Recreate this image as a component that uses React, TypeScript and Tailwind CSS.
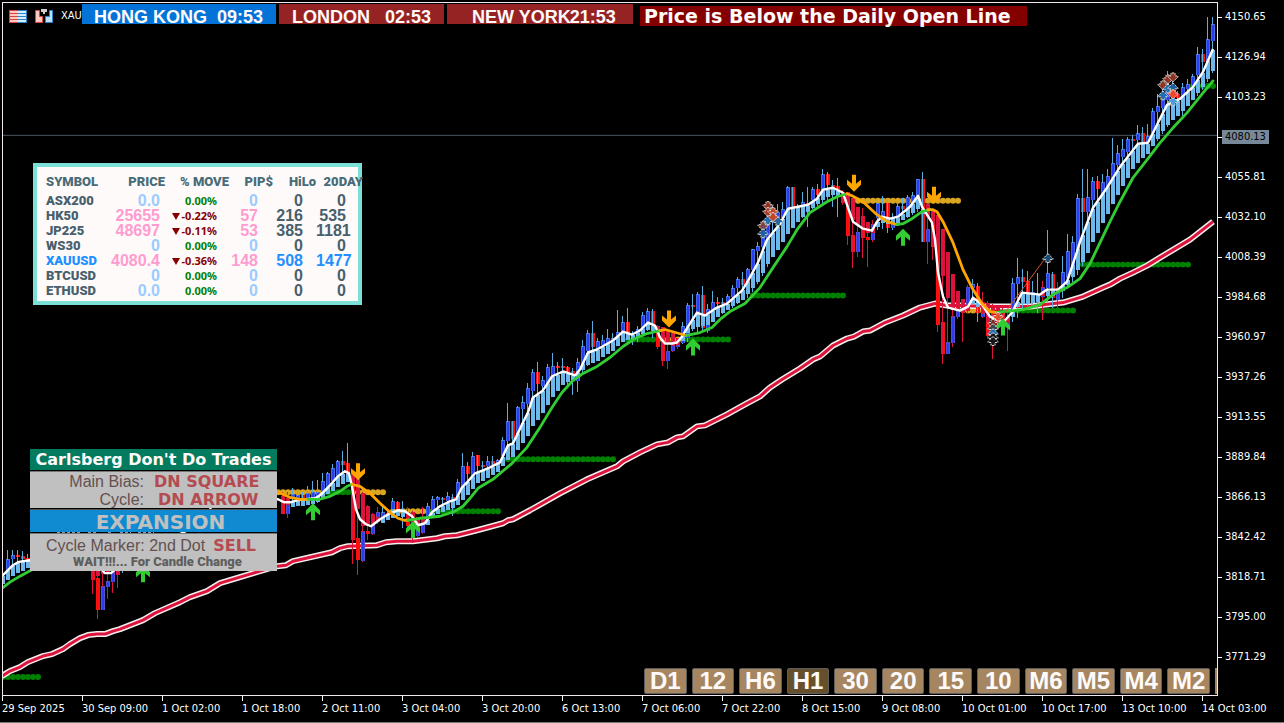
import React from "react";

type Point = [number, number];

const SPACING = 5;

/* Candles: starting x, then one entry per bar: high, body top, body bottom, low, colour. */
const RUNS: [number, string][] = [
  [8, "551 560 578 580 b|551 556 560 572 b|551 556 558 570 r|552 557 560 568 r|555 559 562 568 r"],
  [93, "560 571 581 595 R|565 579 611 620 R|571 587 611 611 B|571 582 588 600 B|571 571 583 594 B|565 573 575 589 R|565 567 570 574 b"],
  [283, "493 503 515 515 R|493 504 515 519 B|489 495 498 504 b|492 496 500 503 b|493 496 500 504 r|487 494 500 503 b|482 493 500 504 b|481 493 499 504 b|474 482 497 499 b|473 474 490 492 b|465 469 482 486 b|461 462 478 482 b|452 462 466 480 r|444 464 482 483 r|475 477 541 565 R|479 539 561 576 R|493 532 562 563 B|506 532 535 541 R|514 522 535 536 B|508 513 523 525 B|508 513 522 523 b|510 514 517 521 r|499 502 510 516 b|502 503 510 513 r|502 511 514 529 b|508 513 527 528 R|512 521 527 544 R|518 525 537 538 B|508 520 534 535 B|504 507 520 523 b|497 500 512 519 b|497 498 501 515 b|498 499 501 512 r|493 497 502 508 b|495 498 502 517 r|480 483 503 506 b|454 467 490 500 b|463 467 475 493 r|453 457 480 487 b|456 456 467 480 r|462 466 468 476 r|457 462 467 474 b|457 462 466 471 r|460 461 464 467 b|438 441 457 464 b|404 422 442 455 b|422 422 440 450 r|407 408 437 445 b|397 403 410 440 b|384 389 405 430 b|370 373 392 415 b|363 373 385 408 r|377 381 387 400 b|365 368 387 395 b|354 367 377 386 b|363 367 369 385 r|359 367 369 385 r|367 368 373 386 r|369 372 382 396 r|359 363 382 393 b|340 346 368 376 b|330 333 352 367 b|321 333 347 363 r|338 341 350 358 b|335 340 345 355 b|329 338 345 351 b|333 338 342 348 b|310 332 340 344 b|316 322 335 341 b|308 322 335 340 r|331 335 338 345 b|326 329 337 342 b|312 315 332 335 b|308 311 323 331 b|309 311 330 338 r|325 326 347 349 R|327 333 362 367 R|330 352 362 370 B|333 345 352 353 B|338 345 347 349 B|322 326 343 344 b|303 305 338 342 b|294 305 307 331 r|292 294 312 332 b|286 295 328 331 r|304 309 331 333 b|291 302 310 319 b|297 302 304 316 r|298 302 304 314 r|294 296 303 310 b|285 288 297 308 b|277 279 288 304 b|272 279 285 300 r|268 269 283 298 b|249 249 270 292 b|242 246 251 284 b|225 233 247 276 b|202 218 240 267 b|206 215 222 257 r|204 212 225 247 b|202 209 218 239 b|186 187 210 231 b|187 187 210 222 r|204 206 211 219 b|192 202 208 218 b|187 203 207 227 r|187 189 200 209 b|184 189 195 206 r|169 174 190 203 b|172 174 185 200 r|180 185 188 207 r|178 186 190 217 r|190 192 203 205 R|192 203 236 245 R|198 235 252 268 R|207 232 252 257 B|208 228 238 258 R|222 237 240 267 R|220 224 240 242 B|202 203 218 230 b|196 211 218 229 b|200 203 228 233 r|213 217 228 230 b|202 206 218 221 b|198 206 209 220 r|195 197 210 218 b|192 195 203 215 b|179 179 197 212 b|172 179 242 242 r|204 229 242 264 B|211 213 247 260 R|215 245 325 332 R|229 322 355 365 R|252 342 355 355 B|274 316 343 347 B|291 310 317 319 B|299 305 311 342 R|285 287 305 313 B|279 284 288 303 b|283 286 313 322 r|292 313 317 318 B|301 303 336 337 R|304 325 335 360 B|305 318 323 328 R|307 318 322 330 R|312 318 325 352 B|278 283 313 322 b|258 277 284 318 b|269 277 282 310 r|271 281 293 306 r|281 292 298 304 b|273 295 302 313 r|281 287 297 320 B|230 273 288 302 b|272 274 298 308 r|282 290 300 313 B|256 272 288 298 b|234 251 278 286 b|236 242 268 282 b|194 198 255 275 b|169 198 212 266 r|169 197 212 252 b|177 181 200 239 b|176 181 189 227 r|174 182 195 215 b|169 176 187 205 b|138 163 180 199 b|145 153 165 192 b|139 149 157 183 b|137 139 152 175 b|135 139 141 167 r|125 133 140 160 b|127 133 143 154 r|124 136 142 150 b|108 111 133 146 b|94 106 112 141 b|88 97 108 134 b|71 88 100 127 b|78 93 98 118 r|91 94 98 111 r|83 87 97 117 b|79 84 89 104 b|74 76 86 100 b|47 54 75 96 b|49 54 62 90 r|17 39 62 82 b|17 24 41 73 b"],
];

const FAST: Point[] = [[2,577],[8,571],[13,566],[18,563],[23,562],[30,561],[98,566],[105,574],[111,574],[125,562],[210,520],[211,495],[278,500],[284,503],[290,503],[297,501],[315,499],[320,496],[330,486],[338,477],[345,472],[349,474],[352,487],[356,510],[360,520],[366,525],[371,527],[380,520],[390,514],[398,511],[405,512],[412,517],[418,526],[425,524],[432,513],[440,507],[450,502],[456,500],[462,488],[468,482],[475,474],[483,471],[490,468],[500,463],[508,446],[513,444],[522,425],[528,413],[533,398],[543,391],[552,377],[563,372],[575,376],[580,370],[588,353],[597,350],[613,341],[623,332],[632,335],[640,331],[648,323],[655,326],[660,338],[665,344],[672,344],[677,343],[682,337],[688,327],[697,313],[705,316],[717,308],[727,304],[742,291],[747,283],[758,263],[767,240],[780,224],[788,209],[798,207],[808,205],[817,199],[823,190],[833,188],[843,193],[848,208],[853,222],[863,229],[872,231],[877,222],[882,217],[890,219],[898,217],[910,207],[918,196],[922,207],[932,223],[935,240],[938,273],[943,297],[948,308],[960,311],[968,307],[973,298],[982,305],[990,317],[1003,323],[1012,313],[1022,293],[1040,295],[1047,290],[1058,290],[1067,282],[1077,252],[1080,242],[1093,208],[1107,188],[1120,167],[1138,144],[1148,143],[1157,125],[1167,105],[1180,99],[1193,87],[1203,72],[1213,49]];

const TREND: { color: string; pts: Point[] }[] = [
  { color: "#32cd32", pts: [[2,589],[10,583],[20,577],[31,571]] },
  { color: "#ffa500", pts: [[278,493],[290,498],[300,500],[308,500]] },
  { color: "#32cd32", pts: [[308,500],[320,500],[330,497],[340,492],[347,487],[352,485]] },
  { color: "#ffa500", pts: [[352,485],[360,487],[370,494],[380,504],[390,513],[398,519],[404,521],[408,521]] },
  { color: "#32cd32", pts: [[408,521],[420,519],[440,517],[455,512],[463,507],[470,499],[478,489],[493,480],[512,464],[527,448],[540,428],[552,408],[562,393],[572,382],[583,374],[597,367],[610,358],[623,347],[635,339],[647,334],[660,331]] },
  { color: "#ffa500", pts: [[660,331],[665,330],[672,332],[686,336]] },
  { color: "#32cd32", pts: [[686,336],[700,333],[712,328],[721,319],[730,312],[745,304],[760,288],[773,268],[787,247],[797,230],[810,213],[827,202],[837,197],[847,194]] },
  { color: "#ffa500", pts: [[847,194],[852,196],[863,202],[877,215],[887,222],[897,225]] },
  { color: "#32cd32", pts: [[897,225],[903,224],[912,219],[922,212],[930,210]] },
  { color: "#ffa500", pts: [[928,210],[933,210],[937,212],[943,222],[953,243],[963,270],[973,290],[982,304],[990,312],[997,313]] },
  { color: "#32cd32", pts: [[997,313],[1003,312],[1023,310],[1040,305],[1053,295],[1067,288],[1080,279],[1090,264],[1100,243],[1110,222],[1120,202],[1133,178],[1147,160],[1160,143],[1173,128],[1187,113],[1203,93],[1213,81]] },
];

const SLOW: Point[] = [[2,677],[10,672],[20,668],[28,663],[43,657],[52,655],[63,650],[70,645],[80,639],[88,636],[97,635],[105,635],[113,632],[120,630],[143,621],[155,614],[180,603],[190,598],[207,592],[220,584],[250,575],[277,567],[286,566],[293,562],[332,553],[340,549],[348,547],[377,546],[386,543],[397,542],[413,542],[437,539],[445,537],[457,536],[477,531],[503,524],[508,521],[513,520],[530,511],[560,494],[587,480],[617,467],[623,462],[640,453],[657,445],[668,443],[677,438],[683,437],[697,427],[705,426],[727,415],[745,405],[760,397],[770,388],[782,380],[800,369],[813,360],[820,357],[833,346],[847,339],[854,337],[863,332],[870,331],[885,323],[903,316],[920,308],[935,304],[947,306],[960,306],[987,307],[1030,307],[1045,305],[1063,303],[1083,297],[1103,288],[1110,285],[1120,279],[1133,273],[1147,266],[1160,258],[1175,249],[1190,240],[1213,222]];

const UP_RANGES: Point[] = [[3,28],[293,348],[383,403],[428,653],[683,838],[878,923],[973,978],[1013,1038],[1048,1053],[1063,1213]];

const DOWN_BARS: [number, number, number][] = [[93,571,575],[98,571,577],[103,571,575],[108,571,574],[113,571,573],[118,571,576],[283,497,507],[288,499,506],[353,475,487],[358,480,510],[363,494,527],[368,507,527],[373,515,526],[378,518,523],[408,513,519],[413,513,523],[418,518,528],[423,520,525],[658,326,331],[663,327,338],[668,330,343],[673,333,346],[678,338,345],[843,192,197],[848,192,206],[853,198,220],[858,207,225],[863,216,230],[868,222,233],[873,228,233],[928,204,217],[933,211,225],[938,215,245],[943,229,276],[948,252,298],[953,274,310],[958,291,310],[963,299,313],[968,305,311],[983,302,313],[988,303,322],[993,305,320],[998,308,318],[1003,313,318],[1008,317,323],[1043,291,296],[1058,288,292]];

const DOTS: [number, number, number, string][] = [[3,38,678,"g"],[278,323,493,"y"],[328,353,493,"g"],[358,383,493,"y"],[393,428,512,"y"],[433,498,512,"g"],[508,613,460,"g"],[628,658,340,"g"],[663,683,340,"y"],[688,728,340,"g"],[753,843,296,"g"],[858,958,201,"y"],[968,993,311,"y"],[998,1073,311,"g"],[1083,1188,265,"g"],[1193,1213,86,"g"]];

const BUY_ARROWS: Point[] = [[143,566],[313,504],[413,522],[693,339],[903,229],[1003,319]];
const SELL_ARROWS: Point[] = [[358,481],[669,328],[854,192],[934,204]];

const TRADES: [number, number, "up" | "down", string][] = [
  [768,206,"down","#8b3526"],[768,212,"down","#a0412c"],[763,226,"down","#7c4444"],[763,234,"up","#1f5f9e"],[768,221,"up","#1f6fb4"],[778,222,"up","#27689c"],[773,212,"down","#c2452a"],[773,217,"down","#c2452a"],
  [998,317,"down","#e4502c"],[993,324,"down","#7c2b22"],[993,329,"up","#3c4550"],[993,334,"up","#1f6fb4"],[993,338,"up","#14181c"],[993,342,"up","#14181c"],
  [1048,259,"up","#1c4a70"],
  [1163,85,"down","#8b3526"],[1168,79,"down","#8b3526"],[1173,77,"down","#8b3526"],[1168,89,"up","#1f6fb4"],[1173,88,"up","#1f5f9e"],[1163,96,"up","#1f6fb4"],[1173,102,"up","#4a9ed8"],[1173,94,"down","#f0452a"],
];

const PRICES = ["4150.65","4126.94","4103.23","4080.13","4055.81","4032.10","4008.39","3984.68","3960.97","3937.26","3913.55","3889.84","3866.13","3842.42","3818.71","3795.00","3771.29"];
const TIMES = ["29 Sep 2025","30 Sep 09:00","1 Oct 02:00","1 Oct 18:00","2 Oct 11:00","3 Oct 04:00","3 Oct 20:00","6 Oct 13:00","7 Oct 06:00","7 Oct 22:00","8 Oct 15:00","9 Oct 08:00","10 Oct 01:00","10 Oct 17:00","13 Oct 10:00","14 Oct 03:00"];
const FRAMES = ["D1","12","H6","H1","30","20","15","10","M6","M5","M4","M2"];

const ROWS = [
  { sym: "ASX200", price: "0.0", move: "0.00%", pip: "0", hilo: "0", day: "0" },
  { sym: "HK50", price: "25655", move: "-0.22%", pip: "57", hilo: "216", day: "535" },
  { sym: "JP225", price: "48697", move: "-0.11%", pip: "53", hilo: "385", day: "1181" },
  { sym: "WS30", price: "0", move: "0.00%", pip: "0", hilo: "0", day: "0" },
  { sym: "XAUUSD", price: "4080.4", move: "-0.36%", pip: "148", hilo: "508", day: "1477" },
  { sym: "BTCUSD", price: "0", move: "0.00%", pip: "0", hilo: "0", day: "0" },
  { sym: "ETHUSD", price: "0.0", move: "0.00%", pip: "0", hilo: "0", day: "0" },
];

const toPoints = (pts: Point[]) => pts.map((p) => p.join(",")).join(" ");

function valueAt(pts: Point[], x: number) {
  for (let i = 1; i < pts.length; i++) {
    const [x0, y0] = pts[i - 1];
    const [x1, y1] = pts[i];
    if (x <= x1) return y0 + ((y1 - y0) * (x - x0)) / (x1 - x0);
  }
  return pts[pts.length - 1][1];
}

const TREND_ALL = TREND.flatMap((s) => s.pts);

function Candles() {
  return (
    <g shapeRendering="crispEdges">
      {RUNS.map(([start, text]) =>
        text.split("|").map((entry, i) => {
          const [h, t, b, l, c] = entry.split(" ");
          const x = start + i * SPACING;
          const top = Number(t);
          const height = Math.max(2, Number(b) - top);
          const blue = c.toLowerCase() === "b";
          const rising = c === c.toLowerCase();
          const wick = rising ? "#5aaee0" : "#dc143c";
          return (
            <g key={x}>
              <rect x={x - 2} y={top} width={4} height={height} fill={blue ? (rising ? "#4169e1" : "#5a4fd0") : "#ff1010"} />
              <rect x={x - 1} y={Number(h)} width={1} height={Number(l) - Number(h)} fill={wick} />
              {blue && <rect x={x - 1} y={top + 1} width={2} height={height - 1} fill="#2a3cf5" />}
            </g>
          );
        })
      )}
    </g>
  );
}

function Histogram() {
  return (
    <g shapeRendering="crispEdges">
      {UP_RANGES.flatMap(([a, b]) => {
        const bars = [];
        for (let x = a; x <= b; x += SPACING) {
          const w = valueAt(FAST, x);
          const g = valueAt(TREND_ALL, x);
          const bottom = Math.max(w + 6, w + 0.7 * (g - w));
          bars.push(<rect key={x} x={x - 2} y={w + 1} width={4} height={bottom - w - 1} fill="#6cb8ea" />);
        }
        return bars;
      })}
      {DOWN_BARS.map(([x, t, b]) => (
        <rect key={x} x={x - 2} y={t} width={4} height={b - t} fill="#dc143c" />
      ))}
    </g>
  );
}

function Chart() {
  return (
    <svg className="block h-full w-full" viewBox="3 3 1214 693" preserveAspectRatio="none" role="img" aria-label="XAUUSD H1 price chart">
      <rect x="3" y="135" width="1214" height="1" fill="#4b545e" />
      {DOTS.flatMap(([a, b, y, c]) => {
        const out = [];
        for (let x = a; x <= b; x += SPACING) out.push(<circle key={`${x}-${y}`} cx={x} cy={y} r={3} fill={c === "g" ? "#008000" : "#daa520"} />);
        return out;
      })}
      <polyline points={toPoints(SLOW)} fill="none" stroke="#f4eeee" strokeWidth={6} strokeLinejoin="round" />
      <polyline points={toPoints(SLOW)} fill="none" stroke="#dc143c" strokeWidth={3} strokeLinejoin="round" />
      <Candles />
      <Histogram />
      <polyline points={toPoints(FAST)} fill="none" stroke="#ffffff" strokeWidth={2.4} strokeLinejoin="round" />
      {TREND.map((s, i) => (
        <polyline key={i} points={toPoints(s.pts)} fill="none" stroke={s.color} strokeWidth={2.8} strokeLinejoin="round" strokeLinecap="round" />
      ))}
      <path d="M57 533H80M88 533H97M108 533H113M120 533H131M138 533H154" stroke="#8a9ab0" strokeWidth="2" strokeDasharray="3 2" />
      <path d="M997 324L1048 255" stroke="#d9532c" strokeWidth="1" />
      {BUY_ARROWS.map(([x, y]) => (
        <path key={x} transform={`translate(${x} ${y})`} d="M0 0L7 7V12L2 8V17H-2V8L-7 12V7Z" fill="#32cd32" />
      ))}
      {SELL_ARROWS.map(([x, y]) => (
        <path key={x} transform={`translate(${x} ${y})`} d="M0 0L7-7V-12L2-8V-17H-2V-8L-7-12V-7Z" fill="#ffa500" />
      ))}
      {TRADES.map(([x, y, dir, fill], i) => (
        <path
          key={i}
          transform={`translate(${x} ${y})${dir === "down" ? " scale(1 -1)" : ""}`}
          d="M0-5L5 0V1H2V4H-2V1H-5V0Z"
          fill={fill}
          stroke="#e8e0dc"
          strokeWidth="1"
          strokeDasharray="2 1"
        />
      ))}
    </svg>
  );
}

function SessionBar() {
  return (
    <header className="absolute top-px left-0 flex items-start font-['Liberation_Sans',Arial,sans-serif] text-[18px] leading-[18px] font-bold whitespace-pre text-[#fffafa]">
      <div className="flex h-6 w-[79px] items-center gap-2 pl-[6px] font-['DejaVu_Sans_Condensed','DejaVu_Sans',sans-serif] text-[11px] font-normal text-white">
        <svg className="shrink-0" width="18" height="13" viewBox="0 0 18 13" aria-hidden="true">
          <rect width="9" height="13" fill="#d8453f" />
          <rect x="9" width="9" height="13" fill="#2f83c6" />
          <path d="M1 1H9V3H1ZM1 4H9V6H1ZM1 7H9V9H1ZM1 10H9V12H1Z" fill="#ffc9c0" />
          <path d="M9 1H17V3H9ZM9 4H17V6H9ZM9 7H17V9H9ZM9 10H17V12H9Z" fill="#d5efff" />
        </svg>
        <svg className="shrink-0" width="18" height="14" viewBox="0 0 18 14" aria-hidden="true">
          <path d="M.5 1.500H4.500V7.500H7.500V13.500H.5Z" fill="#ffc9c0" stroke="#d8453f" />
          <path d="M14.500 1.500H17.500V13.500H10.500V7.500H14.500Z" fill="#b9e2ff" stroke="#2f83c6" />
          <path d="M6 0H12V3H10V5H8V3H6Z" fill="#d0d0d0" />
        </svg>
        <span>XAU</span>
      </div>
      <div className="flex gap-[3px]">
        <div className="flex h-5 w-[194px] justify-between bg-[#0373d8] pt-[4px] pr-[13px] pl-3"><span>HONG KONG</span><span>09:53</span></div>
        <div className="flex h-5 w-[165px] justify-between bg-[#962323] px-[13px] pt-[4px]"><span>LONDON</span><span>02:53</span></div>
        <div className="flex h-5 w-[186px] bg-[#962323] pt-[4px] pl-[25px]"><span>NEW YORK</span><span className="-ml-px">21:53</span></div>
      </div>
      <p className="mt-[2px] ml-[7px] h-5 w-[387px] bg-[#840000] pl-1 font-['DejaVu_Sans',sans-serif] text-[19px] leading-[20px]">Price is Below the Daily Open Line</p>
    </header>
  );
}

function SymbolTable() {
  return (
    <section className="absolute top-[160px] left-[30px] h-[142px] w-[329px] border-4 border-[#7be0d6] bg-[#fffafa] pt-1 pl-[9px]">
      <table className="w-[317px] table-fixed border-collapse text-right font-['Liberation_Sans',Arial,sans-serif] text-[16px] leading-[15px] font-bold text-[#48606c]">
        <colgroup>
          <col className="w-[55px]" /><col className="w-[64px]" /><col className="w-[64px]" /><col className="w-[44px]" /><col className="w-[43px]" /><col className="w-[47px]" />
        </colgroup>
        <thead className="font-[Roboto,sans-serif] text-[13px] leading-[20px] whitespace-nowrap text-[#486c78]">
          <tr className="h-[22px]">
            <th scope="col" className="text-left font-black">SYMBOL</th><th scope="col" className="font-black">PRICE</th><th scope="col" className="font-black">% MOVE</th><th scope="col" className="font-black">PIP$</th><th scope="col" className="font-black">HiLo</th><th scope="col" className="font-black">20DAY</th>
          </tr>
        </thead>
        <tbody>
          {ROWS.map((r) => {
            const down = r.move.startsWith("-");
            const hot = r.sym === "XAUUSD";
            const value = down ? "text-[#ff9ccf]" : "text-[#9accff]";
            return (
              <tr key={r.sym} className={hot ? "h-[15px] text-[#1e90ff]" : "h-[15px]"}>
                <th scope="row" className="text-left font-[Roboto,sans-serif] text-[13px] font-black">{r.sym}</th>
                <td className={"pr-[5px] " + value}>{r.price}</td>
                <td className={"pr-3 font-['Noto_Sans',sans-serif] text-[11px] whitespace-nowrap " + (down ? "text-[#860000]" : "text-[#008000]")}>
                  {down && <svg className="mr-[2px] mb-px inline" width="8" height="7" viewBox="0 0 8 7" aria-hidden="true"><path d="M0 0H8L4 7Z" fill="currentColor" /></svg>}
                  {r.move}
                </td>
                <td className={"pr-[15px] " + value}>{r.pip}</td>
                <td className="pr-[13px]">{r.hilo}</td>
                <td className="pr-[17px]">{r.day}</td>
              </tr>
            );
          })}
        </tbody>
      </table>
    </section>
  );
}

function SignalPanel() {
  return (
    <section className="absolute top-[446px] left-[27px] flex w-[247px] flex-col gap-px font-['Liberation_Sans',Arial,sans-serif] text-[16px] leading-[18px] whitespace-nowrap text-[#65504f]">
      <h2 className="h-[21px] bg-[#037b5f] text-center font-['DejaVu_Sans',sans-serif] text-[16px] leading-[22px] font-bold text-[#fffafa]">Carlsberg Don't Do Trades</h2>
      <dl className="grid h-[37px] grid-cols-[114px_1fr] gap-x-2 border-t border-[#777] bg-[#c0c0c0] pt-px">
        <dt className="text-right">Main Bias:</dt>
        <dd className="pl-[2px] font-['DejaVu_Sans',sans-serif] font-bold text-[#b54a50]">DN SQUARE</dd>
        <dt className="text-right">Cycle:</dt>
        <dd className="pl-[6px] font-['DejaVu_Sans',sans-serif] font-bold text-[#b54a50]">DN ARROW</dd>
      </dl>
      <p className="h-[23px] border-t border-[#555] bg-[#108bd2] pl-[14px] text-center font-['DejaVu_Sans',sans-serif] text-[20px] leading-[24px] font-bold text-[#c0c0c0]">EXPANSION</p>
      <div className="h-[38px] border-t border-[#777] bg-[#c0c0c0] pt-[3px]">
        <p className="flex gap-2 pl-4 leading-[18px]"><span>Cycle Marker: 2nd Dot</span><strong className="font-['DejaVu_Sans',sans-serif] font-bold text-[#b54a50]">SELL</strong></p>
        <p className="pl-2 text-center font-[Roboto,sans-serif] text-[13px] leading-[14px] font-black text-[#5f5f5f]">WAIT!!!... For Candle Change</p>
      </div>
    </section>
  );
}

function Timeframes() {
  return (
    <nav aria-label="Timeframe" className="absolute right-0 bottom-px flex w-[573px] overflow-hidden">
      <div className="grid w-[566px] shrink-0 grid-cols-12 gap-[5px]">
        {FRAMES.map((f) => (
          <button
            key={f}
            type="button"
            aria-pressed={f === "H1"}
            className={"h-[26px] rounded-xs border border-[#5d5d5d] font-['Liberation_Sans',Arial,sans-serif] text-[24px] leading-[24px] font-bold text-[#fffafa] " + (f === "H1" ? "bg-[#66502b]" : "bg-[#a58660]")}
          >
            {f}
          </button>
        ))}
      </div>
      <span className="ml-[5px] h-[26px] w-[2px] bg-[#a58660]" />
    </nav>
  );
}

export default function App() {
  return (
    <main className="grid h-screen grid-cols-[minmax(0,1fr)_66px] grid-rows-[minmax(0,1fr)_26px] overflow-hidden border-b border-[#777] bg-black pt-[2px] pl-[2px] font-['DejaVu_Sans_Condensed','DejaVu_Sans',sans-serif] text-[11px] text-white">
      <div className="relative border border-[#f0e8ec]">
        <Chart />
        <SessionBar />
        <SymbolTable />
        <SignalPanel />
        <Timeframes />
      </div>
      <ul className="flex flex-col gap-6 overflow-hidden pt-[7px]">
        {PRICES.map((p) => (
          <li key={p} className="flex h-4 shrink-0 items-center">
            <span className="h-px w-1 bg-white" />
            <span className={p === "4080.13" ? "bg-[#778899] px-[3px] leading-[14px] text-black" : "px-[3px] leading-[14px]"}>{p}</span>
          </li>
        ))}
      </ul>
      <ol className="col-span-2 flex overflow-hidden whitespace-nowrap">
        {TIMES.map((t) => (
          <li key={t} className="w-20 shrink-0">
            <span className="block h-[5px] w-px bg-white" />
            <span className="block leading-[16px]">{t}</span>
          </li>
        ))}
      </ol>
    </main>
  );
}
